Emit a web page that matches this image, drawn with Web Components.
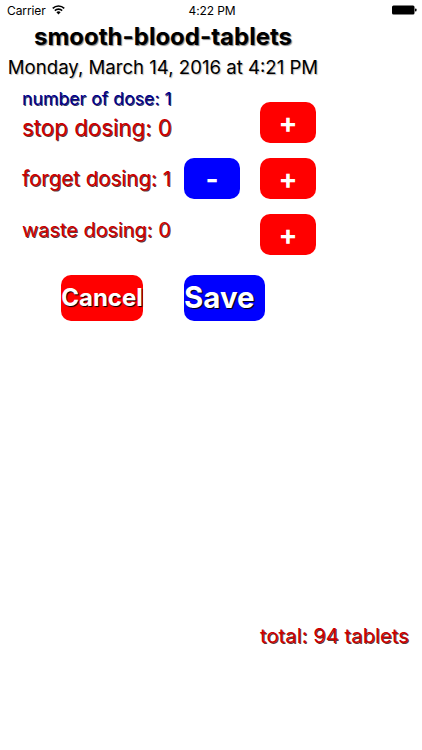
<!DOCTYPE html>
<html><head><meta charset="utf-8"><style>
html,body{margin:0;padding:0;background:#fff}
body{width:422px;height:750px;overflow:hidden;font-family:Inter,"Liberation Sans",sans-serif}
</style></head><body>
<status-bar></status-bar>
<dose-screen></dose-screen>
<script>
const FONT='Inter,"Liberation Sans",sans-serif';
class StatusBar extends HTMLElement{constructor(){super();this.attachShadow({mode:'open'}).innerHTML=`<style>
:host{display:grid;grid-template-columns:1fr auto 1fr;align-items:center;height:20px;padding:0 5px 0 7px;font:400 12px ${FONT};color:#000;letter-spacing:-.1px}
.l{display:flex;align-items:center;gap:6px}.r{display:flex;justify-content:flex-end;align-items:center}
svg{display:block}
</style><div class="l"><span>Carrier</span><svg width="13" height="10" viewBox="0 0 13 10"><path d="M6.5 9.6 4.4 7.3a3 3 0 0 1 4.2 0Z"/><path d="M3.4 6.2 2.3 5a6 6 0 0 1 8.4 0L9.6 6.2a4.4 4.4 0 0 0-6.2 0Z"/><path d="M1.3 3.9.2 2.7a9 9 0 0 1 12.6 0l-1.1 1.2a7.4 7.4 0 0 0-10.4 0Z"/></svg></div>
<span>4:22 PM</span>
<div class="r"><svg width="25" height="10" viewBox="0 0 25 10"><rect x="0" y="0.5" width="22.5" height="9" rx="1.5"/><rect x="23" y="3.5" width="1.5" height="3" rx=".7"/></svg></div>`}}
customElements.define('status-bar',StatusBar);

class ActionButton extends HTMLElement{constructor(){super();this.attachShadow({mode:'open'}).innerHTML=`<style>
:host{display:flex;align-items:center;justify-content:center;box-sizing:border-box;width:56px;height:41px;border-radius:10px;background:var(--bg,#f00);color:#fff;font:700 28px/1 ${FONT}}
:host([big]){width:var(--w,82px);height:46px;font-size:var(--fs,27px);justify-content:var(--jc,center);text-shadow:1px 1px 1px #000;border-radius:10px}
</style><slot></slot>`}}
customElements.define('action-button',ActionButton);

class DoseLabel extends HTMLElement{constructor(){super();this.attachShadow({mode:'open'}).innerHTML=`<style>
:host{display:block;white-space:nowrap;color:var(--c,#cc0000);font:400 var(--fs,20.5px)/1.2 ${FONT};text-shadow:1px 1px 0 var(--sh,rgba(50,0,0,.8))}
</style><slot></slot>`}}
customElements.define('dose-label',DoseLabel);

class DoseScreen extends HTMLElement{constructor(){super();this.attachShadow({mode:'open'}).innerHTML=`<style>
:host{display:flex;flex-direction:column;height:730px;box-sizing:border-box;font-family:${FONT}}
.title{width:326px;text-align:center;font:700 24px/30px ${FONT};color:#000;text-shadow:1px 1px 1px #888;margin-top:2px}
.date{width:326px;white-space:nowrap;text-align:center;font:400 18.6px/24px ${FONT};color:#000;text-shadow:1px 1px 1px #bbb;margin-top:3px}
.stack{margin:9px 0 0 22px}
.row{display:grid;grid-template-columns:162px 56px 20px 56px;align-items:start;margin-bottom:15px}
.plus{grid-column:4}.minus{grid-column:2}
.first action-button{margin-top:14px}
.lab{padding-top:9px}
.acts{display:flex;margin:5px 0 0 61px;gap:41px}
.foot{margin-top:auto;padding:0 13px 102px 0;align-self:flex-end}
</style>
<div class="title">smooth-blood-tablets</div>
<div class="date">Monday, March 14, 2016 at 4:21 PM</div>
<div class="stack">
<div class="row first"><div><dose-label style="--c:#00008c;--sh:rgba(0,0,50,.8);--fs:17.7px">number of dose: 1</dose-label><dose-label style="margin-top:6px;--fs:22.3px">stop dosing: 0</dose-label></div><action-button class="plus">+</action-button></div>
<div class="row"><dose-label class="lab" style="--fs:20.5px">forget dosing: 1</dose-label><action-button class="minus" style="--bg:#00f">-</action-button><action-button class="plus">+</action-button></div>
<div class="row"><dose-label class="lab" style="--fs:19.9px;padding-top:5px">waste dosing: 0</dose-label><action-button class="plus">+</action-button></div>
</div>
<div class="acts"><action-button big style="--fs:24px">Cancel</action-button><action-button big style="--bg:#00f;--fs:29.5px;--w:81px;--jc:flex-start">Save</action-button></div>
<dose-label class="foot" style="--fs:20.3px">total: 94 tablets</dose-label>`}}
customElements.define('dose-screen',DoseScreen);
</script>
</body></html>
